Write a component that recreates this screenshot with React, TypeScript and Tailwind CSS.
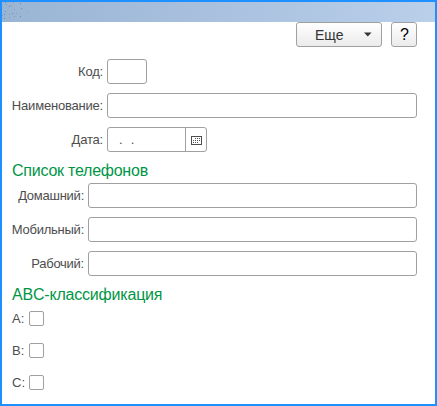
import type { ReactNode } from 'react';

const box = 'h-[25px] rounded-[3px] border border-[#a0a0a0] bg-white outline-none';

function Row({ label, labelClass, children }: { label: string; labelClass: string; children: ReactNode }) {
  return (
    <label className="flex h-[25px] items-center">
      <span className={`${labelClass} mr-[4px] flex shrink-0 whitespace-nowrap text-[13px] leading-[25px] text-[#4d4d4d]`}>
        {label}
      </span>
      {children}
    </label>
  );
}

function CalendarIcon() {
  return (
    <svg width="11" height="9" viewBox="0 0 11 9" shapeRendering="crispEdges">
      <path d="M0 0h11v9H0zM1 1v7h9V1z" fill="#4d4d4d" fillRule="evenodd" />
      <path
        d="M4 2h1v1H4zM6 2h1v1H6zM8 2h1v1H8zM2 4h1v1H2zM4 4h1v1H4zM6 4h1v1H6zM8 4h1v1H8zM2 6h1v1H2zM4 6h1v1H4zM6 6h1v1H6z"
        fill="#4d4d4d"
      />
    </svg>
  );
}

// Speckles at the left end of the title bar: x, y, colour
const specks: [number, number, string][] = [
  [3, 0, '#5f87d2'], [4, 2, '#86a3a0'], [18, 1, '#5f87d2'], [7, 4, '#5f87d2'], [9, 3, '#86a3a0'],
  [19, 6, '#5f87d2'], [12, 7, '#86a3a0'], [3, 9, '#5f87d2'], [25, 9, '#86a3a0'], [2, 12, '#5f87d2'],
  [7, 12, '#86a3a0'], [10, 11, '#5f87d2'], [14, 11, '#86a3a0'], [0, 13, '#86a3a0'], [18, 14, '#5f87d2'],
  [7, 15, '#86a3a0'], [12, 14, '#86a3a0'], [2, 16, '#5f87d2'], [11, 0, '#86a3a0'],
];

export default function App() {
  return (
    <div className="h-[406px] w-[437px] overflow-hidden border-2 border-[#1e90ff] bg-white font-['Liberation_Sans',Arial,sans-serif]">
      <header className="h-[20px] bg-linear-to-r from-[#9ab4d4] to-[#b9cfea]">
        <svg width="30" height="20" shapeRendering="crispEdges">
          {specks.map(([x, y, fill]) => (
            <rect key={`${x}-${y}`} x={x} y={y} width="1" height="1" fill={fill} />
          ))}
        </svg>
      </header>
      <main className="pl-[10px] pr-[18px]">
        <div className="flex justify-end gap-[9px]">
          <button className="flex h-[25px] w-[86px] items-center rounded-[3px] border border-[#a0a0a0] bg-linear-to-b from-white to-[#ebebeb] pl-[18px] pr-[9px] text-[#333]">
            <span className="pt-px text-[14px] leading-[23px]">Еще</span>
            <svg className="ml-auto" width="9" height="5" viewBox="0 0 9 5">
              <path d="M1 0.5h7.5L4.75 4.5z" fill="#333" />
            </svg>
          </button>
          <button className="flex h-[25px] w-[26px] justify-center rounded-[3px] border border-[#a0a0a0] bg-linear-to-b from-white to-[#ebebeb] pl-px text-[16px] leading-[24px] text-black">
            ?
          </button>
        </div>
        <section className="mt-[12px] flex flex-col gap-[9px]">
          <Row label="Код:" labelClass="w-[91px] justify-end tracking-[-0.2px]">
            <input className={`${box} w-[40px]`} />
          </Row>
          <Row label="Наименование:" labelClass="w-[91px] justify-end tracking-[-0.2px]">
            <input className={`${box} w-[310px]`} />
          </Row>
          <Row label="Дата:" labelClass="w-[91px] justify-end tracking-[-0.2px]">
            <div className={`${box} flex w-[100px]`}>
              <span className="flex-1 whitespace-pre pl-[11px] text-[13px] leading-[24px] tracking-[0.3px] text-[#4d4d4d]">{'.  .'}</span>
              <span className="flex w-[21px] items-center justify-center border-l border-[#a0a0a0] pt-px">
                <CalendarIcon />
              </span>
            </div>
          </Row>
        </section>
        <h2 className="mt-[9px] h-[22px] whitespace-nowrap text-[16px] leading-[20px] tracking-[-0.24px] text-[#009646]">Список телефонов</h2>
        <section className="flex flex-col gap-[9px]">
          <Row label="Домашний:" labelClass="w-[72px] justify-end tracking-[-0.25px]">
            <input className={`${box} w-[329px]`} />
          </Row>
          <Row label="Мобильный:" labelClass="w-[72px] justify-end tracking-[-0.25px]">
            <input className={`${box} w-[329px]`} />
          </Row>
          <Row label="Рабочий:" labelClass="w-[72px] justify-end tracking-[-0.25px]">
            <input className={`${box} w-[329px]`} />
          </Row>
        </section>
        <h2 className="mt-[9px] h-[21px] whitespace-nowrap text-[16px] leading-[20px] tracking-[-0.2px] text-[#009646]">ABC-классификация</h2>
        <section className="flex flex-col gap-[7px]">
          {['A:', 'B:', 'C:'].map((name) => (
            <Row key={name} label={name} labelClass="w-[13px]">
              <input type="checkbox" className="h-[15px] w-[15px] appearance-none rounded-[2px] border border-[#a0a0a0] bg-white" />
            </Row>
          ))}
        </section>
      </main>
    </div>
  );
}
